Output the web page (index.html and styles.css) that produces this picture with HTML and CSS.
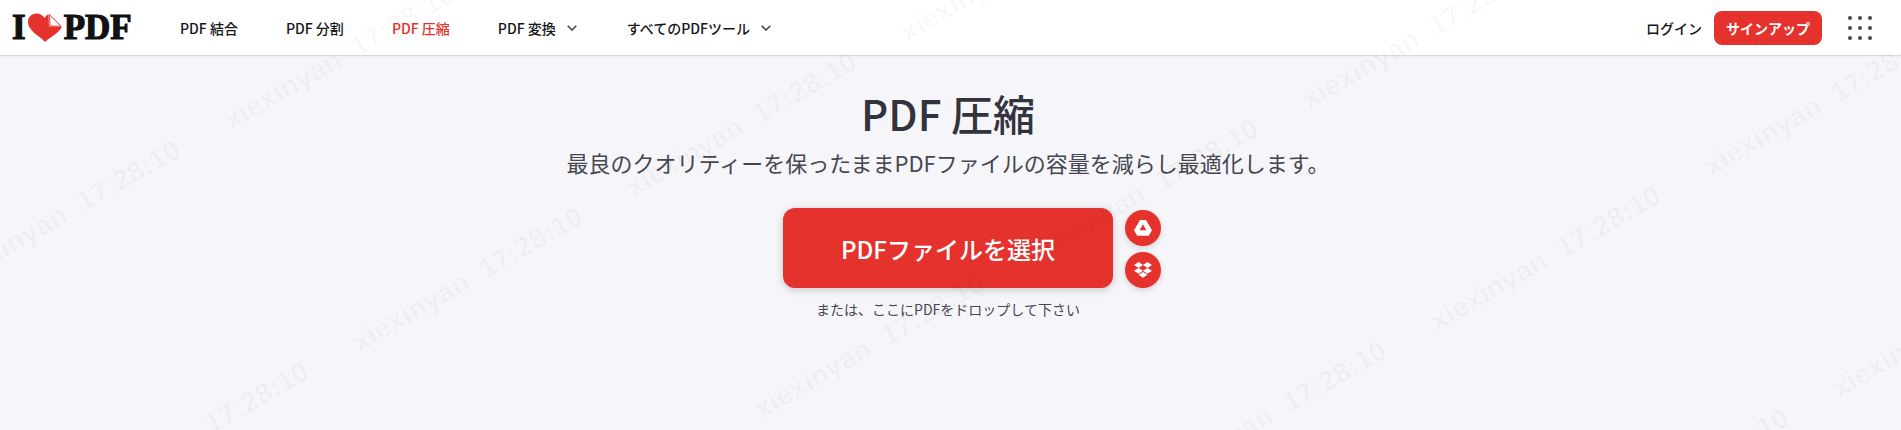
FILE: index.html
```html
<!DOCTYPE html>
<html lang="ja">
<head>
<meta charset="utf-8">
<title>PDF 圧縮</title>
<link rel="stylesheet" href="styles.css">
</head>
<body>
<header class="header">
  <a class="logo">
    <span class="logo-text">I</span>
    <svg class="logo-heart" width="34" height="29" viewBox="0 0 34 29"><path d="M17 29C12 23 0 18 0 9 0 3.500 4 .5 8.500 .5 12 .5 15 2.500 16.500 5 17.500 3.500 19 2 20.500 1L21 13.500 34 14C30 21 22 24 17 29Z" fill="#e5322d"/><path d="M21.500 1.800 33 13.200 22 13.200Z" fill="#fff" stroke="#e5322d" stroke-width="1"/></svg>
    <span class="logo-text">PDF</span>
  </a>
  <nav class="nav">
    <a class="nav-item">PDF 結合</a>
    <a class="nav-item">PDF 分割</a>
    <a class="nav-item nav-active">PDF 圧縮</a>
    <a class="nav-item nav-drop">PDF 変換
      <svg class="chev" width="10" height="6" viewBox="0 0 10 6"><path d="M.7.7 5 5 9.3.7" fill="none" stroke="#47474f" stroke-width="1.6"/></svg></a>
    <a class="nav-item nav-drop">すべてのPDFツール
      <svg class="chev" width="10" height="6" viewBox="0 0 10 6"><path d="M.7.7 5 5 9.3.7" fill="none" stroke="#47474f" stroke-width="1.6"/></svg></a>
  </nav>
  <div class="actions">
    <a class="login">ログイン</a>
    <a class="signup">サインアップ</a>
    <div class="apps">
      <i></i><i></i><i></i><i></i><i></i><i></i><i></i><i></i><i></i>
    </div>
  </div>
</header>
<main class="main">
  <h1 class="title">PDF 圧縮</h1>
  <h2 class="subtitle">最良のクオリティーを保ったままPDFファイルの容量を減らし最適化します。</h2>
  <div class="uploader">
    <a class="pick">PDFファイルを選択</a>
    <div class="clouds">
      <a class="cloud"><svg width="18" height="16" viewBox="0 0 18 16"><path fill="#fff" fill-rule="evenodd" d="M6 0h6l6 10.200-3.200 5.600H3.200L0 10.200zM9 4.200 5.600 10.200h6.800z"/></svg></a>
      <a class="cloud"><svg width="18" height="18" viewBox="0 0 18 16"><path fill="#fff" d="M4.600 0 0 3l4.600 2.900L9 3zM13.400 0 9 3l4.400 2.900L18 3zM0 8.800l4.600 3L9 8.800 4.600 5.900zM13.400 5.900 9 8.800l4.400 3 4.600-3zM4.600 12.800 9 15.800l4.400-3L9 9.900z"/></svg></a>
    </div>
  </div>
  <p class="hint">または、ここにPDFをドロップして下さい</p>
</main>
<svg class="watermark" width="1901" height="430" aria-hidden="true">
  <g class="wm-row">
    <text transform="translate(183 155) rotate(-30)">xiexinyan  17:28:10</text>
    <text transform="translate(585 222) rotate(-30)">xiexinyan  17:28:10</text>
    <text transform="translate(987 289) rotate(-30)">xiexinyan  17:28:10</text>
    <text transform="translate(1389 356) rotate(-30)">xiexinyan  17:28:10</text>
    <text transform="translate(1791 423) rotate(-30)">xiexinyan  17:28:10</text>
    <text transform="translate(457 0) rotate(-30)">xiexinyan  17:28:10</text>
    <text transform="translate(859 67) rotate(-30)">xiexinyan  17:28:10</text>
    <text transform="translate(1261 134) rotate(-30)">xiexinyan  17:28:10</text>
    <text transform="translate(1663 201) rotate(-30)">xiexinyan  17:28:10</text>
    <text transform="translate(2065 268) rotate(-30)">xiexinyan  17:28:10</text>
    <text transform="translate(1937 46) rotate(-30)">xiexinyan  17:28:10</text>
    <text transform="translate(1535 -21) rotate(-30)">xiexinyan  17:28:10</text>
    <text transform="translate(1133 -88) rotate(-30)">xiexinyan  17:28:10</text>
    <text transform="translate(311 377) rotate(-30)">xiexinyan  17:28:10</text>
    <text transform="translate(713 444) rotate(-30)">xiexinyan  17:28:10</text>
  </g>
</svg>
</body>
</html>
```
FILE: styles.css
```css
* { box-sizing: border-box; }
html, body { margin: 0; padding: 0; height: 430px; overflow: hidden; }
body {
  position: relative;
  background: #f5f5fa;
  font-family: "Noto Sans CJK JP", "Noto Sans", sans-serif;
  color: #33333b;
}
.header {
  display: flex;
  align-items: center;
  height: 56px;
  padding: 0 29px 0 12px;
  background: #fff;
  border-bottom: 1px solid #d9d9de;
  box-shadow: 0 1px 2px rgba(0,0,0,.04);
}
.logo { display: flex; align-items: center; width: 120px; height: 30px; }
.logo-text {
  font-family: "Liberation Serif", serif;
  font-weight: 700;
  font-size: 35px;
  line-height: 30px;
  color: #111;
  -webkit-text-stroke: 1.2px #111;
}
.logo-heart { margin: 0 2px 0 2px; flex: none; }
.nav { display: flex; align-items: center; margin-left: 24px; }
.nav-item {
  display: flex;
  align-items: center;
  padding: 0 24px;
  font-size: 14px;
  font-weight: 500;
  color: #161619;
  white-space: nowrap;
}
.nav-drop + .nav-drop { margin-left: 2px; }
.nav-active { color: #e5322d; }
.chev { margin-left: 11px; }
.actions { display: flex; align-items: center; margin-left: auto; }
.login { font-size: 14px; font-weight: 500; color: #161619; }
.signup {
  margin-left: 12px;
  width: 108px;
  height: 34px;
  display: flex;
  align-items: center;
  justify-content: center;
  background: #e5322d;
  color: #fff;
  border-radius: 8px;
  font-size: 14px;
  font-weight: 700;
}
.apps {
  margin-left: 26px;
  display: grid;
  grid-template-columns: repeat(3, 4px);
  gap: 6px;
  width: 24px;
}
.apps i { display: block; width: 4px; height: 4px; border-radius: 50%; background: #47474f; }
.main { display: flex; flex-direction: column; align-items: center; padding: 31px 5px 0 0; }
.title {
  margin: 0 0 7px;
  font-size: 42px;
  line-height: 52px;
  font-weight: 500;
  color: #33333b;
}
.subtitle {
  margin: 0;
  font-size: 22px;
  line-height: 32px;
  font-weight: 400;
  color: #47474f;
}
.uploader { position: relative; margin-top: 30px; }
.pick {
  display: flex;
  align-items: center;
  justify-content: center;
  width: 330px;
  height: 80px;
  background: #e5322d;
  color: #fff;
  border-radius: 12px;
  font-size: 24px;
  font-weight: 500;
  box-shadow: 0 2px 8px rgba(0,0,0,.18);
}
.clouds {
  position: absolute;
  left: 342px;
  top: 2px;
  display: flex;
  flex-direction: column;
  gap: 6px;
}
.cloud {
  display: flex;
  align-items: center;
  justify-content: center;
  width: 36px;
  height: 36px;
  border-radius: 50%;
  background: #e5322d;
  box-shadow: 0 2px 6px rgba(0,0,0,.15);
}
.hint { margin: 11px 0 0; font-size: 14px; line-height: 20px; color: #47474f; }
.watermark { position: absolute; left: 0; top: 0; pointer-events: none; }
.wm-row text {
  font-family: "Liberation Sans", sans-serif;
  font-weight: 700;
  font-size: 28px;
  letter-spacing: .3px;
  fill: #000;
  fill-opacity: .028;
  text-anchor: end;
  white-space: pre;
}
```
